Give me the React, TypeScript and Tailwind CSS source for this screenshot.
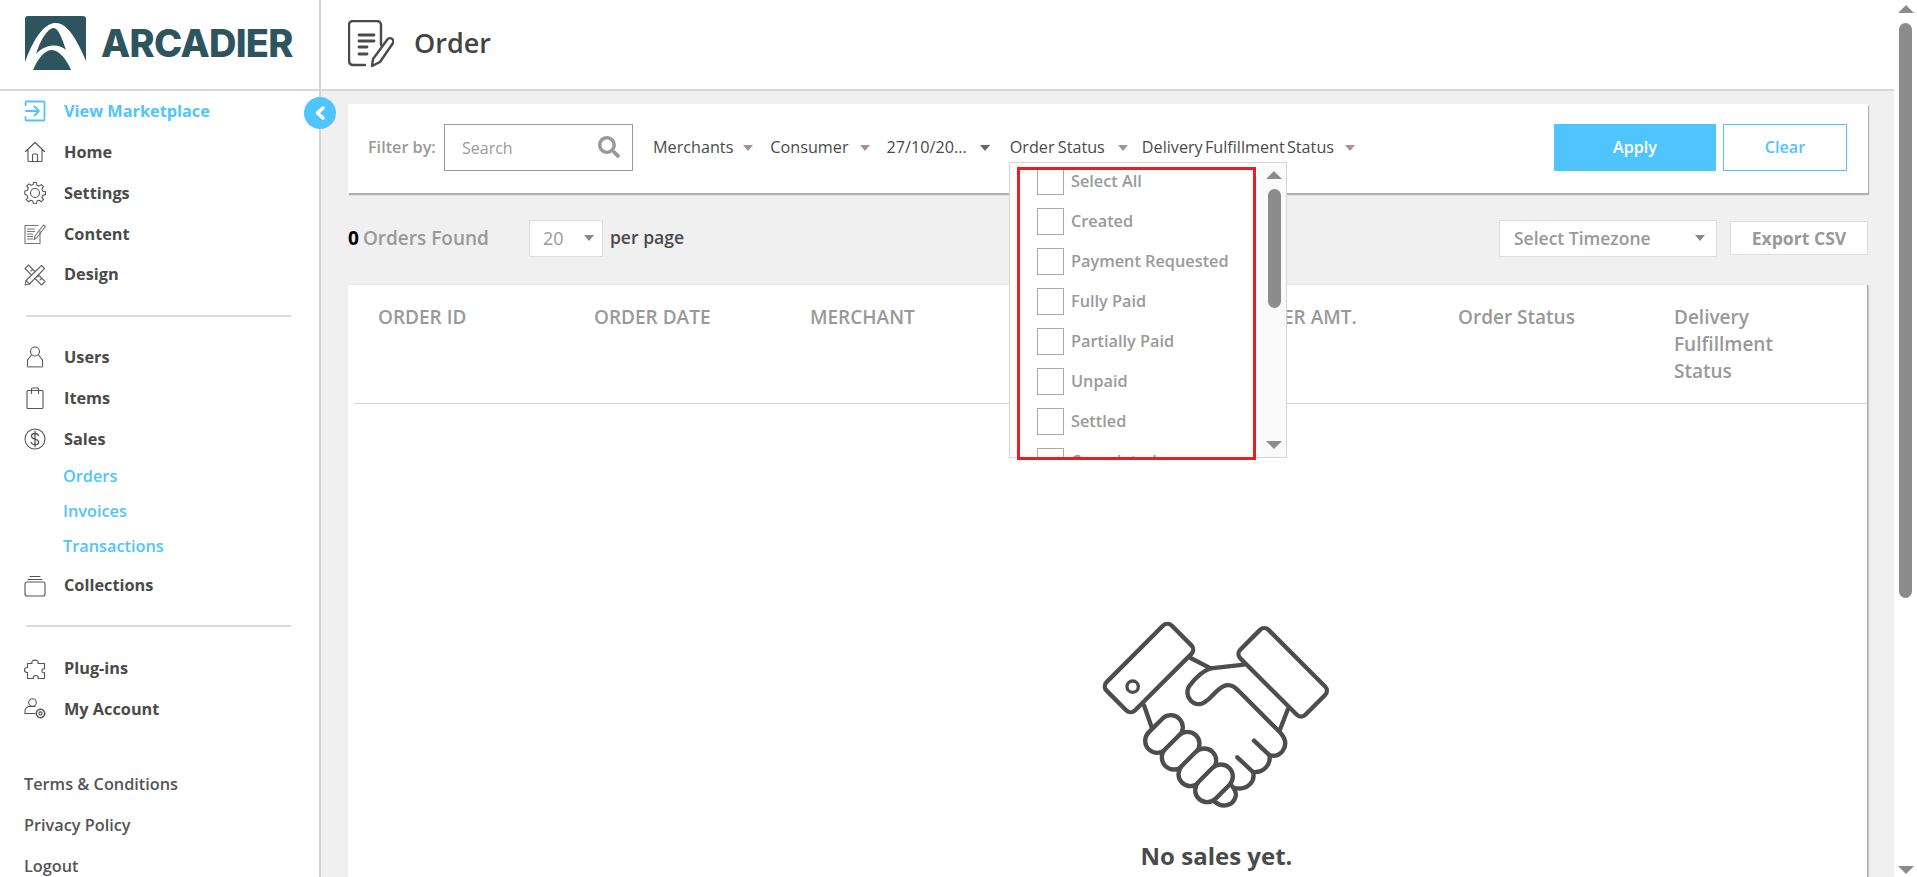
import React from "react";
import { FaSearch } from "react-icons/fa";

const S = ({ children, color = "#555" }: { children: React.ReactNode; color?: string }) => (
  <svg width="22" height="22" viewBox="0 0 22 22" fill="none" stroke={color} strokeWidth="1.1" strokeLinecap="round" strokeLinejoin="round">
    {children}
  </svg>
);

const icons: Record<string, React.ReactNode> = {
  view: (
    <S color="#50c4ff">
      <g strokeWidth="1.8">
        <path d="M1.5 5V2.5a1 1 0 0 1 1-1h17a1 1 0 0 1 1 1v17a1 1 0 0 1-1 1h-17a1 1 0 0 1-1-1V17" />
        <path d="M2 11h13M10.5 6.5 15 11l-4.500 4.500" />
      </g>
    </S>
  ),
  home: (
    <S>
      <path d="M1.500 10.500 11 1.500l9.500 9M4 9v10.500a1 1 0 0 0 1 1h12a1 1 0 0 0 1-1V9M8.500 20.500V14a1 1 0 0 1 1-1h3a1 1 0 0 1 1 1v6.500" />
    </S>
  ),
  settings: (
    <S>
      <circle cx="11" cy="11" r="4.500" />
      <path d="M9.500 1h3l.6 2.700 2.200.9 2.300-1.500 2.100 2.100-1.500 2.300.9 2.200 2.700.6v3l-2.700.6-.9 2.200 1.500 2.300-2.100 2.100-2.300-1.500-2.200.9-.6 2.700h-3l-.6-2.700-2.200-.9-2.300 1.500-2.100-2.100 1.500-2.300-.9-2.200L.7 13V9.500l2.700-.6.9-2.200L2.800 4.400l2.100-2.100 2.300 1.500 2.200-.9z" transform="translate(.1 -.4) scale(.98)" />
    </S>
  ),
  content: (
    <S color="#777">
      <path d="M16 8V20.500H1V2.500h13" />
      <path d="M3.500 6h7M3.500 8.500h7M3.500 11h5M3.500 13.500h5M3.500 16h5" strokeWidth="1.100" />
      <path d="M10 16.500l1-3.500 8.500-11 2 1.500-8.500 11z" />
    </S>
  ),
  design: (
    <S color="#666">
      <path d="M4.500 1 21 17.500 17.500 21 1 4.500zM7 7l1.800-1.800M10 10l1.800-1.800M13 13l1.800-1.800M16 16l1.800-1.800" />
      <path d="M1 21l1-4.500L17.500 1.500l3 3L5.500 20z" fill="#fff" />
      <path d="M2 16.500l3.500 3.500" />
    </S>
  ),
  users: (
    <S>
      <circle cx="11" cy="5.500" r="4.500" />
      <path d="M7.500 9 3.500 14v6.500h15V14l-4-5" />
      <path d="M3.500 21h15" strokeWidth="1.500" stroke="#aaa" />
    </S>
  ),
  items: (
    <S>
      <rect x="3" y="3.500" width="16" height="18" rx="1" />
      <path d="M7.500 6.500V2a1 1 0 0 1 1-1h5a1 1 0 0 1 1 1v4.500" />
    </S>
  ),
  sales: (
    <S>
      <circle cx="11" cy="11" r="10" />
      <path d="M14.500 7.500C14 6 12.500 5.500 11 5.500c-2 0-3.500 1-3.500 2.700 0 3.800 7.200 2 7.200 5.800 0 1.700-1.700 2.700-3.700 2.700-1.700 0-3.300-.7-3.800-2.300M11 3.500v15" strokeWidth="1.300" />
    </S>
  ),
  collections: (
    <S>
      <rect x="1" y="7" width="20" height="14" rx="2" />
      <path d="M4 4.500h14M6 1.500h10" />
    </S>
  ),
  plugins: (
    <S>
      <path d="M8 5.500C6.500 1 15.500 1 14 5.500H20.500V11C17 9.500 17 16 20.500 14.500V20.500H14C15.500 16.500 8 16.500 9.500 20.500H3.500V14.500C-.5 14.500-.5 9.500 3.500 9.500V5.500z" />
    </S>
  ),
  account: (
    <S>
      <circle cx="8.500" cy="4.500" r="3.800" />
      <path d="M11 15.500H1v-2.500c0-2.500 2-4.500 4-4.500h6" />
      <circle cx="16.500" cy="15.500" r="1.600" />
      <circle cx="16.500" cy="15.500" r="4.200" strokeDasharray="2 1" strokeWidth="1.500" />
    </S>
  ),
};

const Item = ({ icon, label, h, blue }: { icon: string; label: string; h: string; blue?: boolean }) => (
  <div className={`flex shrink-0 items-center pl-[24px] ${h}`}>
    <span className="w-[40px] flex items-center shrink-0">{icons[icon]}</span>
    <span className={`text-[16.3px] font-bold ${blue ? "text-[#50c4ff]" : "text-[#4a4a4a]"}`}>{label}</span>
  </div>
);

const Caret = ({ color = "#a88f98" }: { color?: string }) => (
  <svg width="10" height="6" viewBox="0 0 10 6" className="shrink-0">
    <path d="M0 0h10L5 6z" fill={color} />
  </svg>
);

const Handshake = () => (
  <svg width="280" height="220" viewBox="0 0 840 660" fill="none" stroke="#4d4d4d" strokeWidth="13" strokeLinecap="round" strokeLinejoin="round">
    <rect x="72" y="150" width="276" height="120" rx="18" transform="rotate(-45 210 210)" />
    <circle cx="161" cy="266" r="17" strokeWidth="10" />
    <rect x="473" y="163" width="276" height="120" rx="18" transform="rotate(45 611 223)" />
    <path d="M335 180 395 211M395 211 495 200M195 322 218 388M626 335 601 400" />
    <path d="M395 211C370 220 345 245 330 265C315 295 340 322 365 318C395 310 410 270 440 262C460 258 470 270 480 280L600 400C620 420 625 440 610 460C600 472 585 475 572 472" />
    <path d="M525 428 572 472C575 500 555 525 522 522" />
    <path d="M475 478 522 522C530 550 505 578 468 570" />
    <path d="M408 612C430 630 462 625 470 595C473 585 470 578 460 565" />
    <g fill="#fff">
      <rect x="190" y="372" width="130" height="72" rx="36" transform="rotate(-45 255 408)" />
      <rect x="240" y="422" width="130" height="72" rx="36" transform="rotate(-45 305 458)" />
      <rect x="290" y="472" width="130" height="72" rx="36" transform="rotate(-45 355 508)" />
      <rect x="340" y="520" width="130" height="72" rx="36" transform="rotate(-45 405 556)" />
    </g>
  </svg>
);

const statuses = ["Select All", "Created", "Payment Requested", "Fully Paid", "Partially Paid", "Unpaid", "Settled", "Completed"];
const columns = ["ORDER ID", "ORDER DATE", "MERCHANT", "CONSUMER", "ORDER AMT.", "Order Status", "Delivery Fulfillment Status"];
const triUp = "w-0 h-0 border-x-[8px] border-x-transparent border-b-[8px] border-b-[#8c8c8c]";
const triDown = "w-0 h-0 border-x-[8px] border-x-transparent border-t-[8px] border-t-[#8c8c8c]";

export default function App() {
  return (
    <div className="w-[1917px] h-[877px] overflow-hidden flex bg-white text-[#4a4a4a] font-['Open_Sans','Noto_Sans',sans-serif]">
      <aside className="w-[321px] shrink-0 h-full border-r-2 border-[#d4d4d4] flex flex-col relative">
        <div className="h-[91px] shrink-0 border-b-2 border-[#d8d8d8] flex items-center pl-[25px] pb-[3px] gap-[15px]">
          <svg width="61" height="54" viewBox="0 0 61 54">
            <path d="M3 0h55a3 3 0 0 1 3 3v51H0V3a3 3 0 0 1 3-3z" fill="#2d545f" />
            <path d="M0 46C8 24 18 8 30 7C42 6 52 24 61 45V54H0z" fill="#fff" />
            <path d="M11 38C15 25 22 13 28 12C33 11 37 22 41 34C34 28 22 27 11 38z" fill="#2d545f" />
            <path d="M8 54C13 42 20 34 27 34C34 34 42 44 46 54z" fill="#2d545f" />
          </svg>
          <span className="font-['Inter',sans-serif] font-extrabold text-[38px] leading-none text-[#2d545f] tracking-[-0.7px]">ARCADIER</span>
        </div>
        <div className="mt-[-0.5px] shrink-0">
          <Item icon="view" label="View Marketplace" h="h-[41px]" blue />
          <Item icon="home" label="Home" h="h-[41px]" />
          <Item icon="settings" label="Settings" h="h-[41px]" />
          <Item icon="content" label="Content" h="h-[41px]" />
          <Item icon="design" label="Design" h="h-[40px]" />
        </div>
        <div className="mt-[20.5px] mb-[19.5px] ml-[26px] mr-[28px] h-[2px] shrink-0 bg-[#dcdcdc]" />
        <Item icon="users" label="Users" h="h-[41px]" />
        <Item icon="items" label="Items" h="h-[41px]" />
        <Item icon="sales" label="Sales" h="h-[41px]" />
        <div className="pl-[63px] mt-[-1px] shrink-0 text-[16.3px] font-semibold text-[#50c4ff]">
          <div className="h-[35px] flex items-center">Orders</div>
          <div className="h-[35px] flex items-center">Invoices</div>
          <div className="h-[35px] flex items-center">Transactions</div>
        </div>
        <div className="mt-[1.5px] shrink-0">
          <Item icon="collections" label="Collections" h="h-[41px]" />
        </div>
        <div className="mt-[19px] mb-[21px] ml-[26px] mr-[28px] h-[2px] shrink-0 bg-[#dcdcdc]" />
        <Item icon="plugins" label="Plug-ins" h="h-[41px]" />
        <Item icon="account" label="My Account" h="h-[40.5px]" />
        <div className="pl-[24px] mt-[34px] shrink-0 text-[16.3px] font-semibold text-[#555]">
          <div className="h-[41px] flex items-center">Terms &amp; Conditions</div>
          <div className="h-[41px] flex items-center">Privacy Policy</div>
          <div className="h-[41px] flex items-center">Logout</div>
        </div>
        <div className="absolute left-[304px] top-[97px] w-[32px] h-[32px] rounded-full bg-[#50c4ff] flex items-center justify-center z-10">
          <svg width="12" height="14" viewBox="0 0 12 14" fill="none" stroke="#fff" strokeWidth="3.500" strokeLinecap="round" strokeLinejoin="round">
            <path d="M9 2 3.500 7 9 12" />
          </svg>
        </div>
      </aside>

      <main className="flex-1 min-w-0 h-full bg-[#f0f0f0] flex flex-col">
        <header className="h-[91px] shrink-0 bg-white border-b-2 border-[#d8d8d8] flex items-center pl-[27px] pr-0 pb-[1px]">
          <svg width="46" height="48" viewBox="0 0 46 48" fill="none" stroke="#4a4a4a" strokeWidth="2.400" strokeLinecap="round" strokeLinejoin="round" className="shrink-0">
            <path d="M17 45H5a4 4 0 0 1-4-4V5a4 4 0 0 1 4-4h24a4 4 0 0 1 4 4v20" />
            <path d="M11 15h15M11 21h15M11 27h8M11 34h8" strokeWidth="2.800" />
            <path d="M24 46l1-7L39 20a2.500 2.500 0 0 1 6 3L32 42z" />
          </svg>
          <h1 className="ml-[20px] text-[27px] font-semibold text-[#444] mb-[2px]">Order</h1>
        </header>

        <div className="pl-[27px] pr-[26px] flex-1 min-h-0 flex flex-col">
          <section className="mt-[13px] h-[89px] shrink-0 bg-white shadow-[1px_2px_1px_#b0b0b0] flex items-center pl-[20px] pr-[21px] pb-[2px] relative text-[16.2px]">
            <span className="font-semibold text-[#999] w-[76px] shrink-0">Filter by:</span>
            <div className="w-[189px] h-[47px] shrink-0 border border-[#999] flex items-center justify-between pl-[17px] pr-[12px] text-[#999]">
              <span className="text-[16px]">Search</span>
              <FaSearch size={22} className="text-[#999] mb-[2px]" />
            </div>
            <span className="ml-[20px]">Merchants</span>
            <span className="ml-[10px]"><Caret /></span>
            <span className="ml-[17px]">Consumer</span>
            <span className="ml-[11px]"><Caret /></span>
            <span className="ml-[17px]">27/10/20...</span>
            <span className="ml-[13px]"><Caret color="#666" /></span>
            <span className="ml-[20px] [word-spacing:-1px]">Order Status</span>
            <span className="ml-[13px]"><Caret /></span>
            <span className="ml-[14px] [word-spacing:-2px]">Delivery Fulfillment Status</span>
            <span className="ml-[11px]"><Caret /></span>
            <button className="ml-auto w-[162px] h-[47px] bg-[#50c4ff] text-white font-semibold text-[16.2px]">Apply</button>
            <button className="ml-[7px] w-[124px] h-[47px] bg-white border border-[#50c4ff] text-[#50c4ff] font-semibold text-[16.2px]">Clear</button>

            <div className="absolute left-[661px] top-[58px] w-[278px] h-[296px] bg-white border border-[#d4d4d4] z-20 flex overflow-hidden">
              <div className="flex-1 min-w-0 overflow-hidden">
                <div className="pl-[27px] mt-[-2px] flex flex-col text-[16.3px] font-semibold text-[#9a9a9a]">
                  {statuses.map((s) => (
                    <div key={s} className="h-[40px] shrink-0 flex items-center">
                      <span className="w-[27px] h-[27px] border border-[#aaa] shrink-0 bg-white" />
                      <span className="ml-[7px]">{s}</span>
                    </div>
                  ))}
                </div>
              </div>
              <div className="w-[24px] shrink-0 bg-[#fafafa] flex flex-col items-center py-[8px]">
                <span className={triUp} />
                <span className="mt-[10px] w-[13px] h-[119px] rounded-full bg-[#8c8c8c]" />
                <span className={`mt-auto ${triDown}`} />
              </div>
            </div>
            <div className="absolute left-[669px] top-[63px] w-[239px] h-[293px] border-[3px] border-[#ed1c24] z-30 pointer-events-none" />
          </section>

          <div className="h-[92px] shrink-0 flex items-center pb-[2px]">
            <span className="text-[19px] font-bold text-black">0</span>
            <span className="ml-[4px] text-[19px] font-semibold text-[#999]">Orders Found</span>
            <div className="ml-[40px] w-[74px] h-[37px] bg-white border border-[#ddd] flex items-center justify-between pl-[13px] pr-[8px] text-[18px] text-[#999]">
              <span>20</span>
              <Caret color="#888" />
            </div>
            <span className="ml-[7px] text-[17.600px] font-semibold text-[#4a4a4a] mb-[2px]">per page</span>
            <div className="ml-auto w-[218px] h-[37px] bg-white border border-[#ddd] flex items-center justify-between pl-[14px] pr-[11px] text-[17.500px] font-semibold text-[#999]">
              <span>Select Timezone</span>
              <Caret color="#888" />
            </div>
            <div className="ml-[13px] w-[138px] h-[34px] bg-white border border-[#ddd] flex items-center justify-center text-[17.600px] font-bold text-[#999]">Export CSV</div>
          </div>

          <section className="flex-1 min-h-0 bg-white border-r border-[#aaa] shadow-[1px_0_1px_#ccc] pl-[6px]">
            <div className="grid grid-cols-[repeat(7,216px)] h-[119px] border-b border-[#d4d4d4] pt-[18.500px] pl-[24px] text-[19px] leading-[27.3px] font-semibold text-[#999]">
              {columns.map((c, i) => (
                <div key={c} className={i === 6 ? "w-[130px]" : ""}>{c}</div>
              ))}
            </div>
            <div className="flex flex-col items-center pl-[217px] pt-[194px]">
              <Handshake />
              <p className="mt-[22px] mr-[5px] text-[24px] leading-[32px] font-bold text-[#4a4a4a]">No sales yet.</p>
            </div>
          </section>
        </div>
      </main>

      <div className="w-[23px] shrink-0 bg-white flex flex-col items-center pt-[5px] pb-[3px]">
        <span className={triUp} />
        <span className="mt-[10px] w-[13px] h-[575px] rounded-full bg-[#8c8c8c]" />
        <span className={`mt-auto ${triDown}`} />
      </div>
    </div>
  );
}
